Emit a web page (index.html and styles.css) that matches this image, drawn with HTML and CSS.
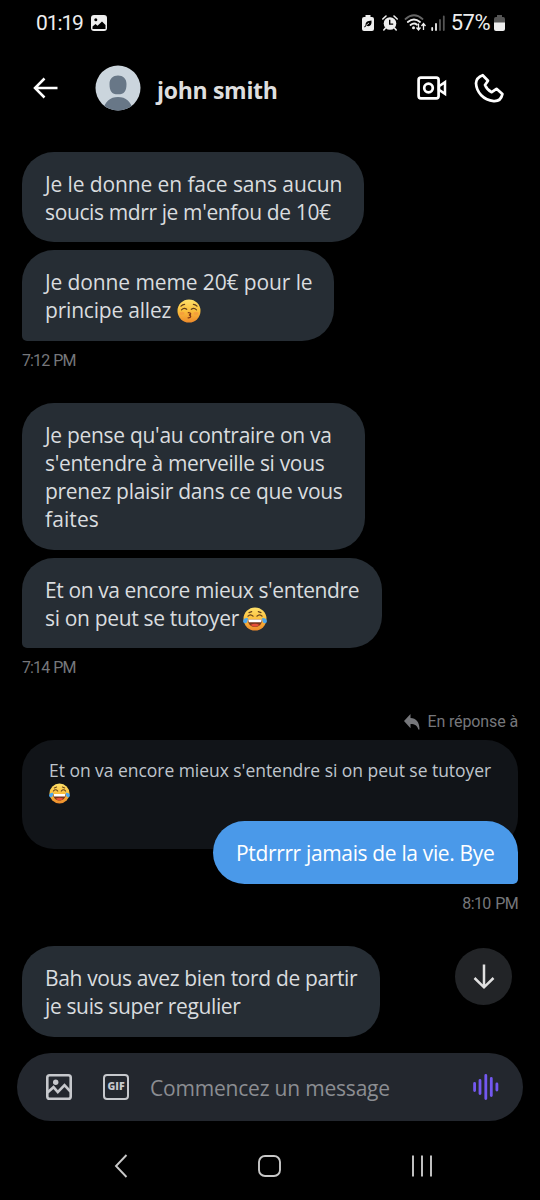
FILE: index.html
```html
<!DOCTYPE html>
<html lang="fr">
<head>
<meta charset="utf-8">
<title>john smith</title>
<link rel="stylesheet" href="styles.css">
</head>
<body>
<svg class="defs" aria-hidden="true">
  <defs>
    <linearGradient id="face" x1="0" y1="0" x2="0" y2="1"><stop offset="0" stop-color="#ffe16a"/><stop offset=".5" stop-color="#fbbf3c"/><stop offset="1" stop-color="#ed8a2b"/></linearGradient>
    <symbol id="joy" viewBox="0 0 24 24">
      <circle cx="12" cy="12" r="11.5" fill="url(#face)"/>
      <path d="M5 9.2q2.4-2.8 5 0M14 9.2q2.6-2.8 5 0M6 5.6l2.700-1M18 5.6l-2.700-1" fill="none" stroke="#65411c" stroke-width="1.2" stroke-linecap="round"/>
      <path d="M4.8 12.5h14.4c0 4.5-3 7.5-7.2 7.5s-7.2-3-7.2-7.5z" fill="#7a351b"/>
      <path d="M5.2 12.5h13.6l-.6 2.8H5.800z" fill="#fff"/>
      <path d="M7.5 18q4.5-2.4 9 0-4.500 3.600-9 0z" fill="#e84f39"/>
      <path d="M5 11.200C2.500 10.800.2 12 .1 14.300c0 2.200 2.800 2.700 3.900.9.700-1.200.5-2.700 1-4zM19 11.200c2.500-.4 4.800.8 4.900 3.100 0 2.200-2.800 2.700-3.900.9-.7-1.200-.5-2.700-1-4z" fill="#4ba6ee"/>
    </symbol>
    <symbol id="kiss" viewBox="0 0 24 24">
      <circle cx="12" cy="12" r="11.500" fill="url(#face)"/>
      <path d="M4.500 10.800q2.500-2.500 5.200-.5M14.300 10.300q2.700-2 5.200.5M4 7.200q1.600-1.800 3.600-1.800M20 7.200q-1.600-1.800-3.600-1.800" fill="none" stroke="#65411c" stroke-width="1.200" stroke-linecap="round"/>
      <path d="M11.300 13.700c3.200-.1 3 2 .7 2.300 2.300.4 2.500 2.900-.9 2.800" fill="none" stroke="#843a16" stroke-width="1.300" stroke-linecap="round"/>
      <ellipse cx="5" cy="14.300" rx="2.500" ry="1.500" fill="#f38a3d" opacity=".5"/><ellipse cx="19" cy="14.300" rx="2.500" ry="1.500" fill="#f38a3d" opacity=".5"/>
    </symbol>
  </defs>
</svg>
<div class="phone">
  <div class="status">
    <span class="clock">01:19</span>
    <svg class="shot" width="16" height="16" viewBox="0 0 16 16"><rect width="16" height="16" rx="3" fill="#eee"/><circle cx="4.800" cy="4.800" r="1.500"/><path d="M1.500 11.500l3-2.500 2 1.800 4.500-4.300 3.500 3.500V14h-13z"/></svg>
    <div class="status-right">
      <svg width="12" height="16" viewBox="0 0 12 16"><path d="M3.500 0h5v2H10a2 2 0 0 1 2 2v10a2 2 0 0 1-2 2H2a2 2 0 0 1-2-2V4a2 2 0 0 1 2-2h1.500z" fill="#eee"/><path d="M9.500 5.500c.5 4.500-1.500 6.500-5 5.300l-1.800 1.700-.6-.8 1.500-1.400C3.200 7 5.500 6 9.500 5.500z"/><path d="M4 10.500l3-2.500" stroke="#eee" stroke-width=".8"/></svg>
      <svg class="alarm" width="16" height="16" viewBox="0 0 16 16"><circle cx="8" cy="8.500" r="6.300" fill="#eee"/><path d="M.8 4L4 1M15.200 4L12 1M3.500 13L1.800 15M12.500 13l1.700 2" stroke="#eee" stroke-width="1.600" stroke-linecap="round"/><path d="M7.700 4.800v4.300h3.500" fill="none" stroke="#000" stroke-width="1.400"/></svg>
      <svg class="wifi" width="24" height="18" viewBox="0 0 24 18"><g fill="none" stroke-width="1.800" stroke-linecap="round"><path d="M1.500 5Q10-2.500 18.500 5" stroke="#666"/><path d="M3.800 8Q10 3 16 8M6.500 11q3.500-2.800 6.500-.3" stroke="#eee"/></g><circle cx="9.500" cy="13.800" r="1.500" fill="#eee"/><path d="M14.500 9.500v6m-2-2l2 2.500 2-2.500M19.500 16v-6m-2 2l2-2.500 2 2.500" fill="none" stroke="#eee" stroke-width="1.300"/></svg>
      <svg class="signal" width="14" height="16" viewBox="0 0 14 16"><path d="M1.200 13v2M5 9v6" stroke="#eee" stroke-width="1.800" stroke-linecap="round"/><path d="M9 5V15M12.800 1.500v13.500" stroke="#555" stroke-width="1.800" stroke-linecap="round"/></svg>
      <span class="pct">57%</span>
      <svg class="battery" width="11" height="16" viewBox="0 0 11 16"><path d="M3 0h5v2h1.200Q11 2 11 4v4H0V4q0-2 1.800-2H3z" fill="#555"/><path d="M0 7.500h11V14q0 2-2 2H2q-2 0-2-2z" fill="#eee"/></svg>
    </div>
  </div>

  <header class="header">
    <svg class="back" width="25" height="22" viewBox="0 0 25 22"><path d="M11.500 1.500L2 11l9.500 9.500M2 11h22.500" fill="none" stroke="#fff" stroke-width="2.500"/></svg>
    <svg class="avatar" width="46" height="46" viewBox="0 0 46 46"><clipPath id="round"><circle cx="23" cy="23" r="22.500"/></clipPath><g clip-path="url(#round)"><path d="M0 0h46v46H0z" fill="#cbd5dd"/><path d="M14.500 19c0-5.500 3.500-8.500 8.500-8.500s8.500 3 8.500 8.500c0 7-2 10.300-8.500 10.300S14.500 26 14.500 19zM8 47c1-10 7-15 15-15s14 5 15 15z" fill="#687787"/></g></svg>
    <h1 class="name">john smith</h1>
    <svg class="video" width="30" height="24" viewBox="0 0 30 24"><rect x="1.600" y="1.700" width="20" height="20.600" rx="2.300" fill="none" stroke="#fff" stroke-width="2.700"/><circle cx="11.500" cy="12" r="4.300" fill="none" stroke="#fff" stroke-width="2.700"/><path d="M22 10.200l6-4v11.600l-6-4z" fill="none" stroke="#fff" stroke-width="2.500"/></svg>
    <svg class="call" width="30" height="31" viewBox="0 0 30 31"><path d="M8.700 2.200L14 7.800 11 12c1.300 3.200 3.500 5.600 6.700 7.200l4.800-3.400 5.900 5.300c-1 4.800-3.900 7.300-8.700 7C9.500 27 2.500 19.500 2 10.300c.2-3.400 2.900-6.800 6.700-8.100z" fill="none" stroke="#fff" stroke-width="2.700" stroke-linejoin="round"/></svg>
  </header>

  <main class="thread">
    <div class="bubble b1"><span class="line l1">Je le donne en face sans aucun</span><span class="line l2">soucis mdrr je m'enfou de 10€</span></div>
    <div class="bubble b2 tail"><span class="line l3">Je donne meme 20€ pour le</span><span class="line l4">principe allez <svg class="emoji" role="img" aria-label="😚"><use href="#kiss"/></svg></span></div>
    <time class="time">7:12 PM</time>

    <div class="bubble b3"><span class="line l5">Je pense qu'au contraire on va</span><span class="line l6">s'entendre à merveille si vous</span><span class="line l7">prenez plaisir dans ce que vous</span><span class="line l8">faites</span></div>
    <div class="bubble b4 tail"><span class="line l9">Et on va encore mieux s'entendre</span><span class="line l10">si on peut se tutoyer <svg class="emoji" role="img" aria-label="😂"><use href="#joy"/></svg></span></div>
    <time class="time">7:14 PM</time>

    <div class="reply-label"><svg width="16" height="16" viewBox="0 0 16 16"><path d="M6.500 0v4c5.500.2 9 3.800 9 11.500h-1.200c-1-4-3.300-5.500-7.800-5.500v4.200L0 7z" fill="#76777b"/></svg><span>En réponse à</span></div>
    <div class="quote"><span class="line">Et on va encore mieux s'entendre si on peut se tutoyer</span><svg class="emoji small" role="img" aria-label="😂"><use href="#joy"/></svg></div>
    <div class="bubble mine"><span class="line">Ptdrrrr jamais de la vie. Bye</span></div>
    <time class="time right">8:10 PM</time>

    <div class="last-row">
      <div class="bubble b5"><span class="line l11">Bah vous avez bien tord de partir</span><span class="line l12">je suis super regulier</span></div>
      <div class="down"><svg width="22" height="26" viewBox="0 0 22 26"><path d="M11 .5v22M1.500 14l9.500 9.300 9.500-9.300" fill="none" stroke="#e0e0e0" stroke-width="2.500"/></svg></div>
    </div>
  </main>

  <div class="composer">
    <svg width="26" height="26" viewBox="0 0 26 26"><rect x="1.300" y="1.300" width="23.400" height="23.400" rx="2.300" fill="none" stroke="#c6c8cc" stroke-width="2.600"/><circle cx="9.700" cy="8.300" r="2.700" fill="#c6c8cc"/><path d="M1.500 18.500l6-5.300 4.300 4.900 6.700-7 6 6.500" fill="none" stroke="#c6c8cc" stroke-width="2.700"/></svg>
    <span class="gif">GIF</span>
    <span class="hint">Commencez un message</span>
    <svg class="voice" width="26" height="26" viewBox="0 0 26 26"><path d="M1.600 9.500v7M7 6.500v13M12.800 1.500v23M18.300 4.500v17M23.900 10v6" stroke="#7358f0" stroke-width="2.800" stroke-linecap="round"/></svg>
  </div>

  <nav class="nav">
    <svg width="14" height="24" viewBox="0 0 14 24"><path d="M12.500 1L2 12l10.500 11" fill="none" stroke="#c8c8c8" stroke-width="1.900"/></svg>
    <svg width="23" height="22" viewBox="0 0 23 22"><rect x="1" y="1" width="21" height="20" rx="6" fill="none" stroke="#c8c8c8" stroke-width="1.900"/></svg>
    <svg width="22" height="22" viewBox="0 0 22 22"><path d="M2 .5v21M11 .5v21M20 .5v21" stroke="#c8c8c8" stroke-width="1.900"/></svg>
  </nav>
</div>
</body>
</html>
```

FILE: styles.css
```css
* { box-sizing: border-box; }
body { margin: 0; background: #000; font-family: "Open Sans", "Noto Sans", sans-serif; color: #d9dcdf; }
svg { display: block; flex: none; }
.defs { position: absolute; width: 0; height: 0; }
.phone { width: 540px; height: 1200px; display: flex; flex-direction: column; overflow: hidden; background: #000; }

.status { height: 46px; display: flex; align-items: center; padding: 0 35px 0 36px; font: 400 21px/26px Roboto, sans-serif; color: #eee; }
.clock { width: 55px; white-space: nowrap; letter-spacing: -1.1px; }
.status-right { margin-left: auto; display: flex; align-items: center; }
.alarm { margin-left: 8px; }
.wifi { margin-left: 6px; }
.signal { margin-left: 3px; }
.pct { margin-left: 6px; font-size: 22px; letter-spacing: -0.5px; }
.battery { margin-left: 4px; }

.header { height: 84px; display: flex; align-items: center; padding: 0 36px 0 33px; }
.avatar { margin-left: 37px; }
.name { margin: 3px 0 0 16px; font-size: 23px; line-height: 30px; font-weight: 700; white-space: nowrap; color: #dedede; letter-spacing: -0.3px; }
.video { margin-left: auto; }
.call { margin-left: 27px; }

.thread { height: 923px; padding: 22px 22px 0; display: flex; flex-direction: column; align-items: flex-start; }
.bubble { flex: none; background: #262d34; border-radius: 32px; padding: 18px 22px 16px 23px; font-size: 21px; line-height: 28px; }
.line { display: block; white-space: nowrap; }
.l1, .l3 { letter-spacing: -0.11px; }
.l2 { letter-spacing: -0.38px; }
.l4 { letter-spacing: -0.2px; }
.l5, .l7 { letter-spacing: -0.3px; }
.l6, .l10 { letter-spacing: -0.33px; }
.l8 { letter-spacing: 0.1px; }
.l9 { letter-spacing: -0.4px; }
.l11, .l12 { letter-spacing: -0.36px; }
.b1 { width: 342px; height: 90px; margin-bottom: 8px; }
.b2 { width: 312px; height: 91px; }
.b3 { width: 343px; height: 147px; margin: 32px 0 8px; }
.b4 { width: 360px; height: 90px; }
.b5 { width: 358px; height: 91px; }
.tail { border-bottom-left-radius: 5px; }
.emoji { display: inline-block; width: 24px; height: 24px; vertical-align: -5px; margin-left: -1px; }
.l4 .emoji { margin-left: 1px; }
.time { height: 22px; margin-top: 8px; font: 400 16px/24px Roboto, sans-serif; letter-spacing: -0.9px; word-spacing: 1px; color: #76777b; }
.time.right { align-self: flex-end; letter-spacing: -0.6px; }

.reply-label { align-self: flex-end; display: flex; align-items: center; gap: 7px; height: 24px; margin-top: 32px; font: 400 16px/24px Roboto, sans-serif; letter-spacing: -0.12px; color: #76777b; }
.quote { width: 496px; height: 109px; margin-top: 6px; padding: 18px 27px; border-radius: 32px; background: #111418; font-size: 17.5px; line-height: 24px; letter-spacing: -0.04px; color: #bfc5cc; }
.emoji.small { display: block; width: 21px; height: 21px; margin: 1px 0 0; }
.mine { align-self: flex-end; width: 305px; height: 63px; margin-top: -28px; background: #4a99e9; color: #fff; letter-spacing: -0.35px; border-bottom-right-radius: 5px; }
.last-row { width: 490px; display: flex; justify-content: space-between; margin-top: 32px; }
.down { width: 57px; height: 57px; margin-top: 2px; border-radius: 50%; background: #222427; display: flex; align-items: center; justify-content: center; }

.composer { height: 68px; margin: 0 17px; padding: 0 24px 0 29px; border-radius: 34px; background: #23272e; display: flex; align-items: center; }
.gif { width: 26px; height: 26px; margin-left: 31px; border: 2.5px solid #c6c8cc; border-radius: 4px; text-align: center; font-size: 10.5px; line-height: 21px; font-weight: 800; color: #c6c8cc; }
.hint { margin: 2px 0 0 21px; font-size: 21px; line-height: 28px; letter-spacing: -0.2px; color: #8b8d92; white-space: nowrap; }
.voice { margin-left: auto; }

.nav { height: 79px; padding: 11px 107px 0 114px; display: flex; align-items: center; justify-content: space-between; }
```
